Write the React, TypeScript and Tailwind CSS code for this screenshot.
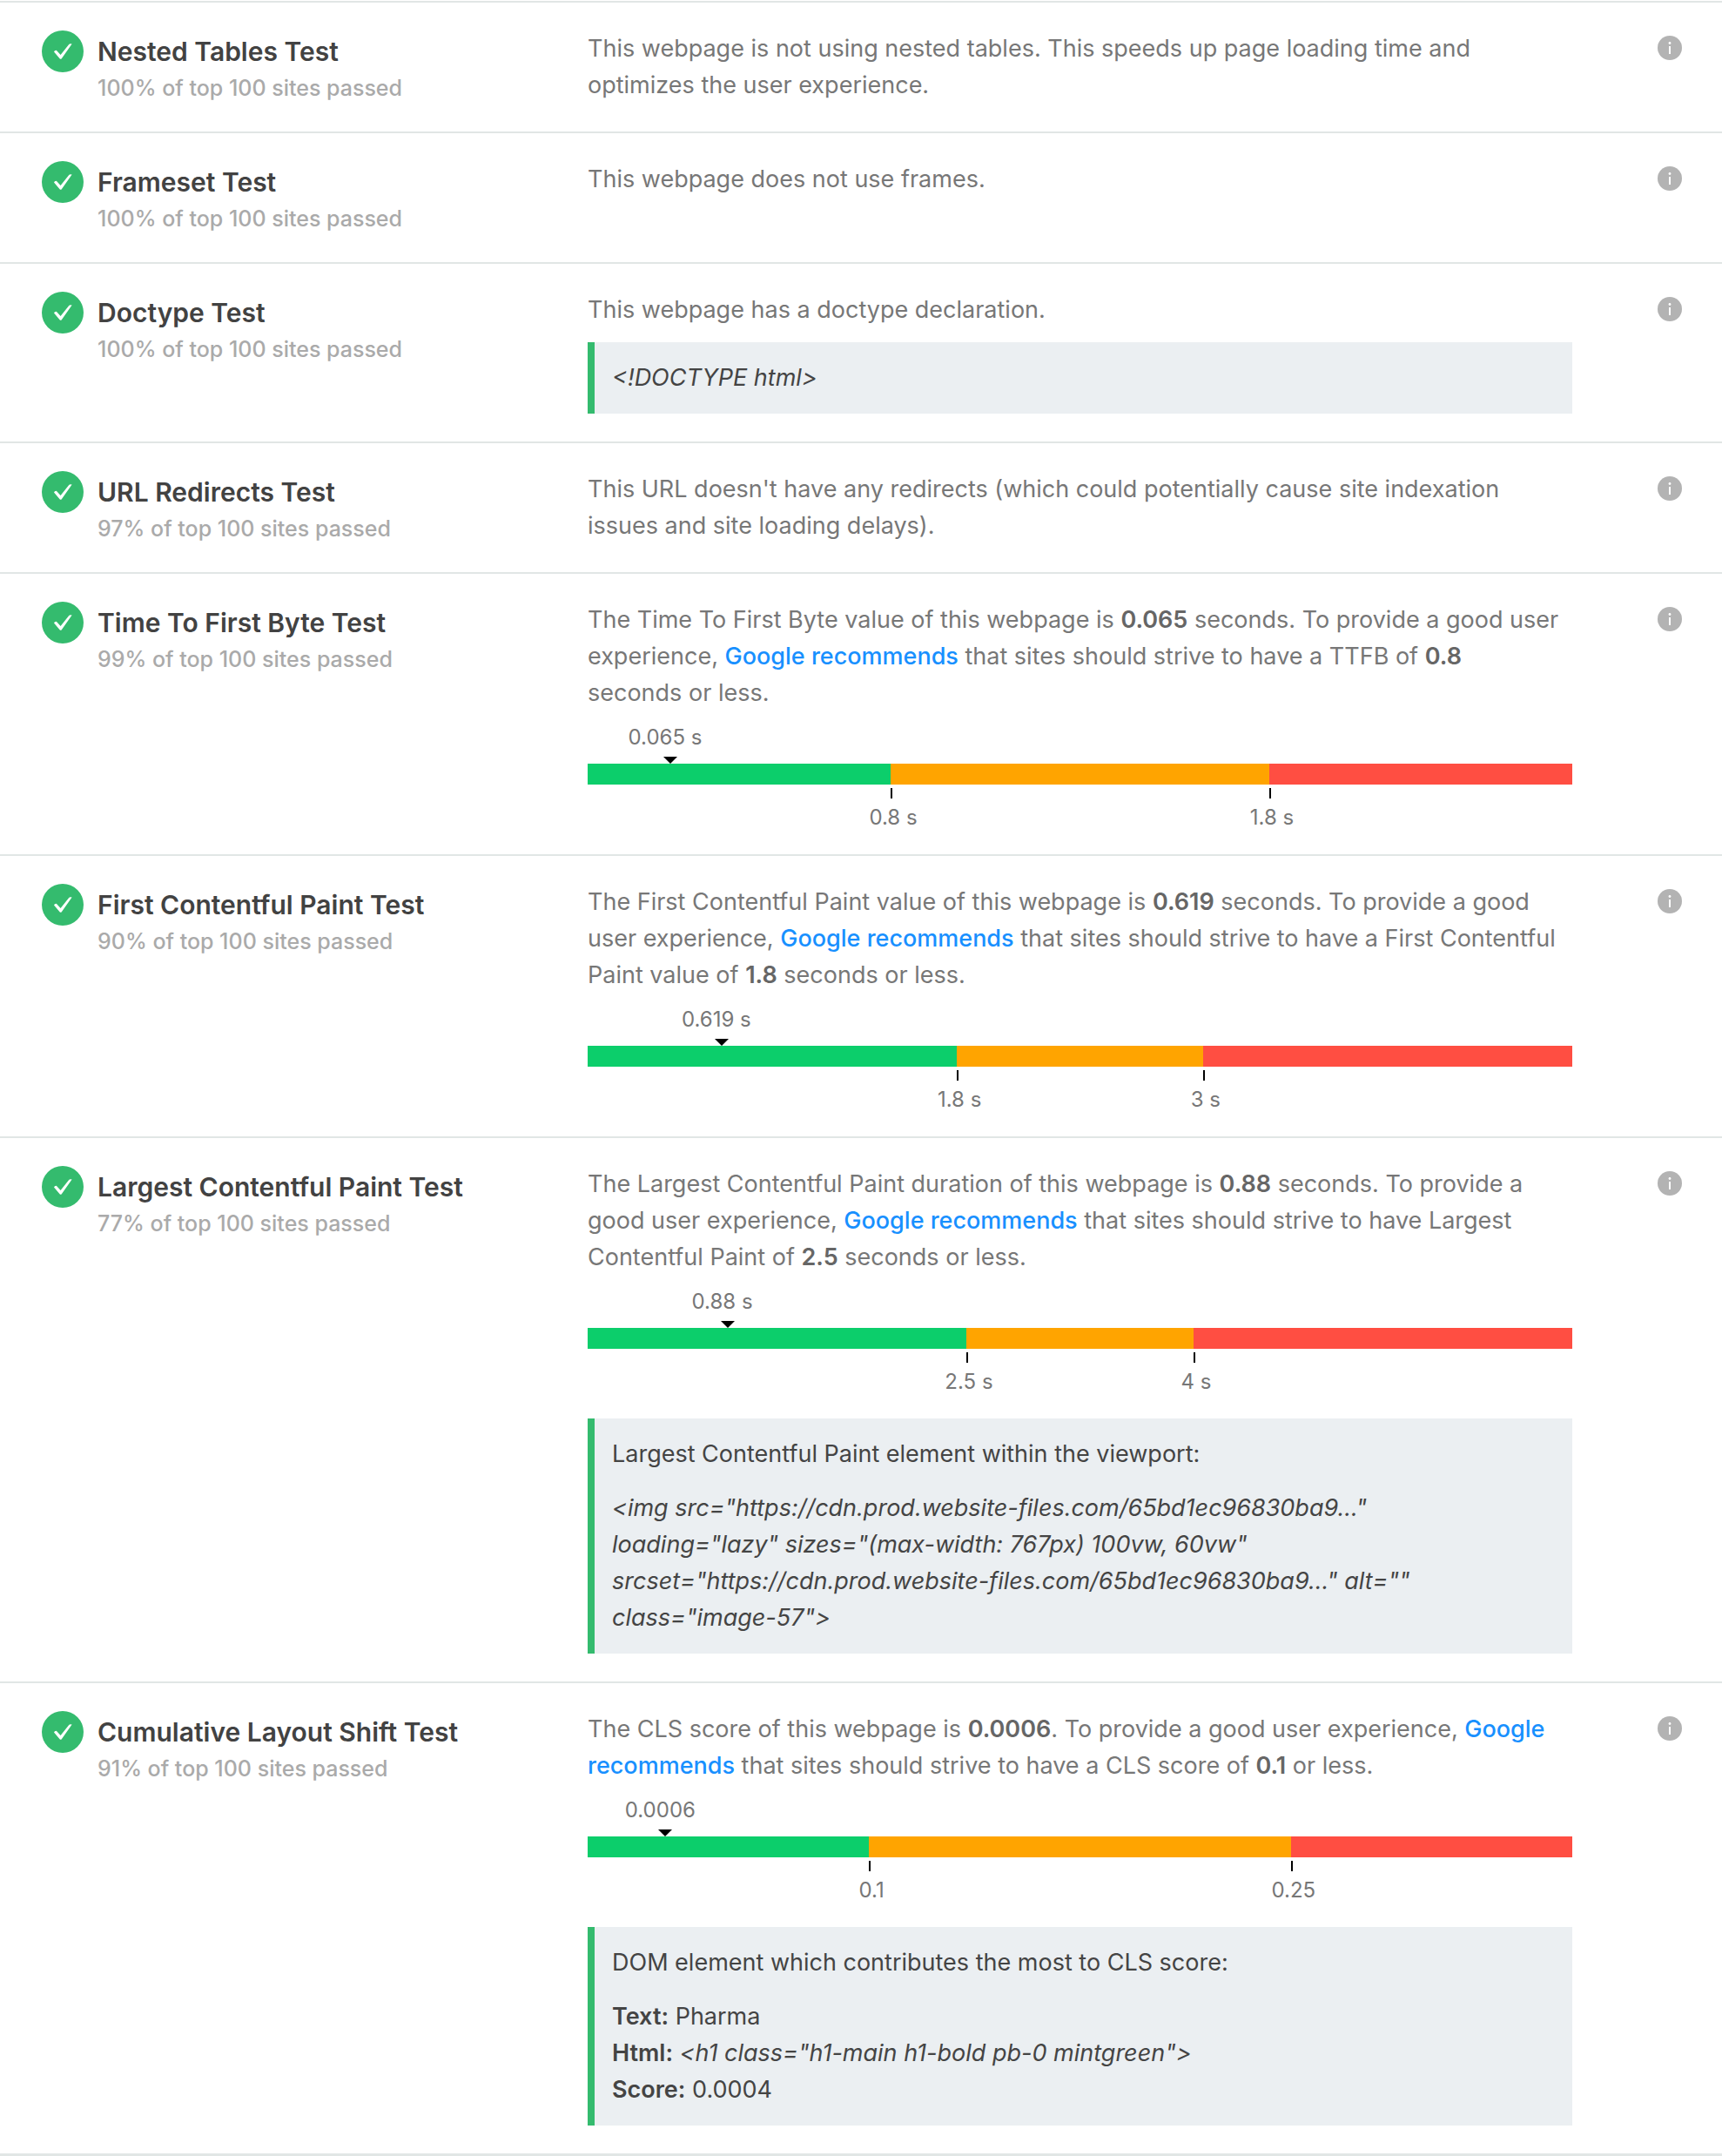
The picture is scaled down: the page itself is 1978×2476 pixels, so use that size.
import type { ReactNode } from "react";

type Scale = {
  value: string;
  marker: number;
  low: { label: string; at: number };
  high: { label: string; at: number };
};

function CheckIcon() {
  return (
    <svg viewBox="0 0 48 48" className="w-12 h-12 shrink-0" aria-label="Passed">
      <circle cx="24" cy="24" r="24" fill="#34bb6e" />
      <path d="M14 24.4Q14.8 22.6 17 22.9L21.6 28L30.8 16.4Q32.2 14.8 34.6 15.6L22.6 32.4Q21.7 33.2 20.8 32.4Z" fill="#fff" />
    </svg>
  );
}

function InfoButton({ title }: { title: string }) {
  return (
    <button type="button" aria-label={`About ${title}`} className="mt-1.5 h-7 w-7">
      <svg viewBox="0 0 28 28" className="w-7 h-7">
        <circle cx="14" cy="14" r="14" fill="#b3b3b3" />
        <circle cx="14" cy="8.5" r="1.4" fill="#fff" />
        <rect x="13" y="12" width="2" height="9" fill="#fff" />
      </svg>
    </button>
  );
}

function Num({ children }: { children: ReactNode }) {
  return <strong className="font-semibold text-[#666]">{children}</strong>;
}

function GoogleLink() {
  return (
    <a href="#google" className="font-medium text-[#1890ff]">
      Google recommends
    </a>
  );
}

/* Tick with its label centered below, starts at the left edge of a segment */
function Tick({ label }: { label: string }) {
  return (
    <div className="flex w-[2px] flex-col items-center">
      <div className="h-3 w-[2px] shrink-0 bg-black" />
      <span className="mt-1 whitespace-nowrap pl-1 text-2xl leading-[36px]">{label}</span>
    </div>
  );
}

function ScaleBar({ scale }: { scale: Scale }) {
  const { low, high } = scale;
  return (
    <div className="pt-3 text-[#777]">
      <div className="flex">
        <div style={{ width: `${scale.marker}%` }} />
        <div className="flex w-0 flex-col items-center">
          <span className="mb-1 whitespace-nowrap pr-3 text-2xl leading-[36px]">{scale.value}</span>
          <svg viewBox="0 0 16 8" className="h-2 w-4 shrink-0">
            <path d="M0 0h16L8 8z" fill="#000" />
          </svg>
        </div>
      </div>
      <div className="flex h-6">
        <div className="bg-[#0cce6b]" style={{ width: `${low.at}%` }} />
        <div className="bg-[#ffa400]" style={{ width: `${high.at - low.at}%` }} />
        <div className="flex-1 bg-[#ff4e42]" />
      </div>
      <div className="flex h-12 pt-1">
        <div style={{ width: `${low.at}%` }} />
        <div style={{ width: `${high.at - low.at}%` }}>
          <Tick label={low.label} />
        </div>
        <div className="flex-1">
          <Tick label={high.label} />
        </div>
      </div>
    </div>
  );
}

function CodeBox({ children, className }: { children: ReactNode; className: string }) {
  return (
    <div className={`border-l-8 border-[#34bb6e] bg-[#ebeff2] p-5 text-[#444] ${className}`}>{children}</div>
  );
}

function TestRow({ title, passed, children }: { title: string; passed: number; children: ReactNode }) {
  return (
    <section className="flex border-t-2 border-[#e1e6e5] py-8">
      <div className="flex w-[675px] shrink-0 gap-4 pl-12">
        <CheckIcon />
        <div>
          <h2 className="text-[30px] leading-[48px] font-semibold text-[#424242]">{title}</h2>
          <p className="text-[25px] leading-[36px] font-medium text-[#aaa]">{passed}% of top 100 sites passed</p>
        </div>
      </div>
      <div className="min-w-0 flex-1 text-[27px] leading-[42px] text-[#777]">{children}</div>
      <div className="flex w-[172px] shrink-0 items-start justify-end pr-[46px]">
        <InfoButton title={title} />
      </div>
    </section>
  );
}

export default function App() {
  return (
    <main className="border-b-[3px] border-[#e1e6e5] bg-white pt-px font-['Inter','Liberation_Sans',sans-serif]">
      <TestRow title="Nested Tables Test" passed={100}>
        <p>This webpage is not using nested tables. This speeds up page loading time and optimizes the user experience.</p>
      </TestRow>

      <TestRow title="Frameset Test" passed={100}>
        <p>This webpage does not use frames.</p>
      </TestRow>

      <TestRow title="Doctype Test" passed={100}>
        <p>This webpage has a doctype declaration.</p>
        <CodeBox className="mt-4">
          <em>{"<!DOCTYPE html>"}</em>
        </CodeBox>
      </TestRow>

      <TestRow title="URL Redirects Test" passed={97}>
        <p>This URL doesn't have any redirects (which could potentially cause site indexation issues and site loading delays).</p>
      </TestRow>

      <TestRow title="Time To First Byte Test" passed={99}>
        <p>
          The Time To First Byte value of this webpage is <Num>0.065</Num> seconds. To provide a good user experience,{" "}
          <GoogleLink /> that sites should strive to have a TTFB of <Num>0.8</Num>
          <br />
          seconds or less.
        </p>
        <ScaleBar
          scale={{
            value: "0.065 s",
            marker: 8.4,
            low: { label: "0.8 s", at: 30.77 },
            high: { label: "1.8 s", at: 69.23 },
          }}
        />
      </TestRow>

      <TestRow title="First Contentful Paint Test" passed={90}>
        <p>
          The First Contentful Paint value of this webpage is <Num>0.619</Num> seconds. To provide a good user
          experience, <GoogleLink /> that sites should strive to have a First Contentful Paint value of{" "}
          <Num>1.8</Num> seconds or less.
        </p>
        <ScaleBar
          scale={{
            value: "0.619 s",
            marker: 13.6,
            low: { label: "1.8 s", at: 37.5 },
            high: { label: "3 s", at: 62.5 },
          }}
        />
      </TestRow>

      <TestRow title="Largest Contentful Paint Test" passed={77}>
        <p>
          The Largest Contentful Paint duration of this webpage is <Num>0.88</Num> seconds. To provide a good user
          experience, <GoogleLink /> that sites should strive to have Largest Contentful Paint of <Num>2.5</Num>{" "}
          seconds or less.
        </p>
        <ScaleBar
          scale={{
            value: "0.88 s",
            marker: 14.2,
            low: { label: "2.5 s", at: 38.46 },
            high: { label: "4 s", at: 61.54 },
          }}
        />
        <CodeBox className="mt-8">
          <p className="mb-5">Largest Contentful Paint element within the viewport:</p>
          <em>
            {'<img src="https://cdn.prod.website-files.com/65bd1ec96830ba9..."'}
            <br />
            {'loading="lazy" sizes="(max-width: 767px) 100vw, 60vw"'}
            <br />
            {'srcset="https://cdn.prod.website-files.com/65bd1ec96830ba9..." alt=""'}
            <br />
            {'class="image-57">'}
          </em>
        </CodeBox>
      </TestRow>

      <TestRow title="Cumulative Layout Shift Test" passed={91}>
        <p>
          The CLS score of this webpage is <Num>0.0006</Num>. To provide a good user experience, <GoogleLink /> that
          sites should strive to have a CLS score of <Num>0.1</Num> or less.
        </p>
        <ScaleBar
          scale={{
            value: "0.0006",
            marker: 7.9,
            low: { label: "0.1", at: 28.57 },
            high: { label: "0.25", at: 71.43 },
          }}
        />
        <CodeBox className="mt-8">
          <p className="mb-5">DOM element which contributes the most to CLS score:</p>
          <p>
            <strong className="font-semibold">Text:</strong> Pharma
          </p>
          <p>
            <strong className="font-semibold">Html:</strong>{" "}
            <em>{'<h1 class="h1-main h1-bold pb-0 mintgreen">'}</em>
          </p>
          <p>
            <strong className="font-semibold">Score:</strong> 0.0004
          </p>
        </CodeBox>
      </TestRow>
    </main>
  );
}
